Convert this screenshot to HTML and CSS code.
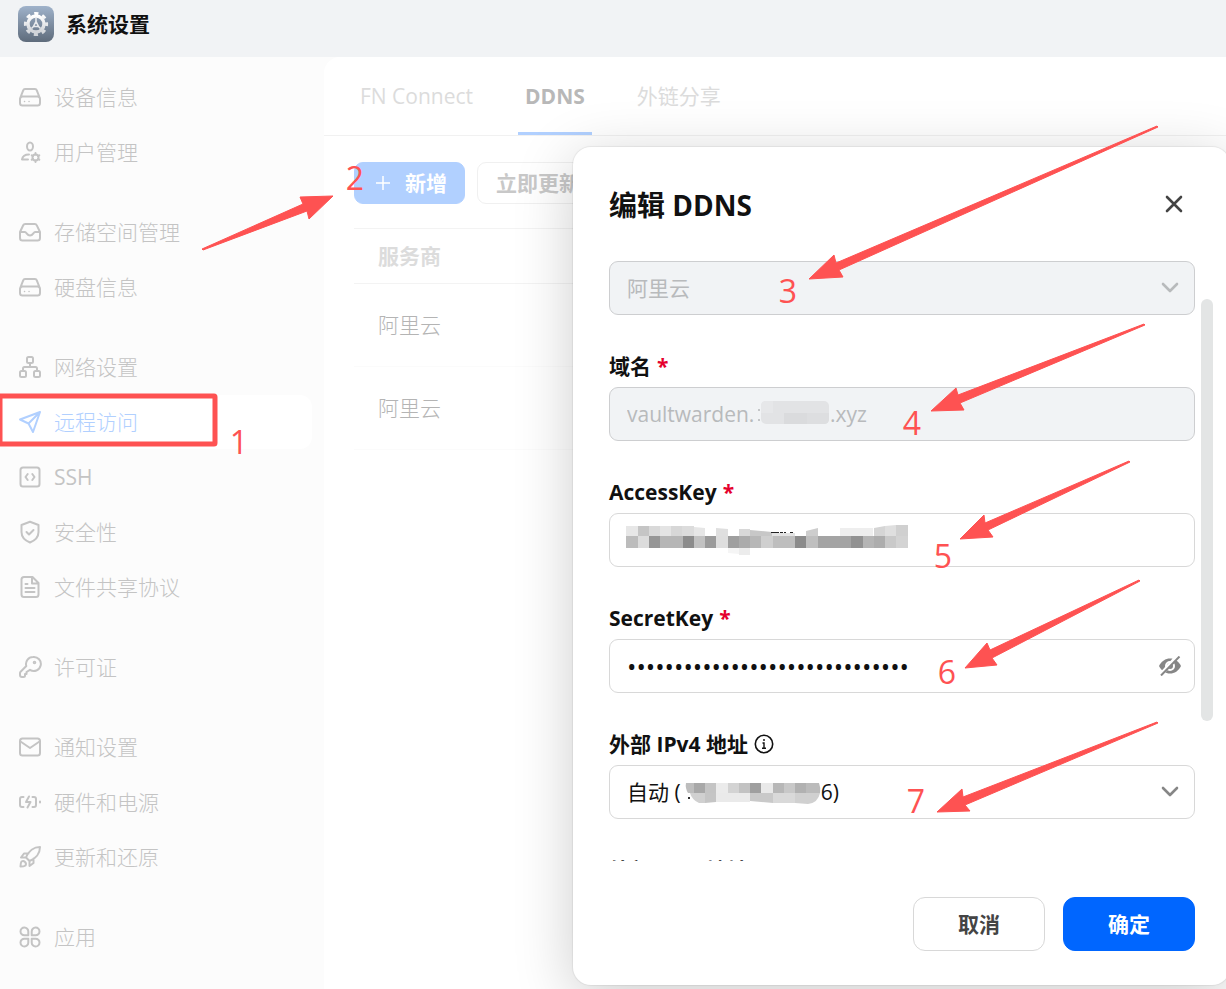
FILE: index.html
```
<!DOCTYPE html>
<html lang="zh-CN">

<head>
    <meta charset="UTF-8">
    <meta name="viewport" content="width=device-width, initial-scale=1.0">
    <title>系统设置</title>
    <link rel="stylesheet" href="styles.css">
</head>

<body>

    <header class="titlebar">
        <svg class="app-icon" viewBox="0 0 36 36">
            <defs>
                <linearGradient id="iconBg" x1="0" y1="0" x2="0" y2="1">
                    <stop offset="0" stop-color="#9fb2ca" />
                    <stop offset="1" stop-color="#5e6b7b" />
                </linearGradient>
                <linearGradient id="iconGear" x1="0" y1="0" x2="0" y2="1">
                    <stop offset="0" stop-color="#ffffff" />
                    <stop offset="1" stop-color="#d0d3d8" />
                </linearGradient>
            </defs>
            <rect width="36" height="36" rx="8" fill="url(#iconBg)" />
            <g fill="none" stroke="url(#iconGear)">
                <circle cx="18" cy="18" r="8" stroke-width="3.400" />
                <circle cx="18" cy="18" r="10.6" stroke-width="3" stroke-dasharray="4.2 4.125" stroke-dashoffset="2.1" />
            </g>
            <g stroke="#e8eaed" stroke-width="1.6" fill="none">
                <path d="M18 12v4M18 15.500l-2.500 5h5zM15.500 20.500l-2 2M20.500 20.500l2 2" />
            </g>
        </svg>
        <h1>系统设置</h1>
    </header>

    <div class="layout">
        <nav class="sidebar">
            <div class="nav-group">
                <a href="#" class="nav-item">
                    <svg class="icon" viewBox="0 0 24 24"><path d="M2 13.500 5.200 5.300Q5.700 4 7 4h10q1.300 0 1.800 1.300L22 13.500M4.500 11.500h15A2.500 2.500 0 0 1 22 14v4a2.500 2.500 0 0 1-2.500 2.500h-15A2.500 2.500 0 0 1 2 18v-4a2.500 2.500 0 0 1 2.500-2.500z" /><path class="dots" d="M6.500 16.500h.1M11 16.500h.1" /></svg>
                    设备信息
                </a>
                <a href="#" class="nav-item">
                    <svg class="icon" viewBox="0 0 24 24"><ellipse cx="12" cy="6.500" rx="3" ry="4" /><path d="M11 14.500c-4 0-6.500 2-7 5h6" /><circle cx="17.500" cy="17.500" r="3" /><path d="M17.500 13v1.500M17.500 20.500V22M13.700 15.300l1.200.7M20.100 19l1.200.700M13.700 19.700l1.200-.7M20.100 16l1.200-.7" /></svg>
                    用户管理
                </a>
            </div>
            <div class="nav-group">
                <a href="#" class="nav-item">
                    <svg class="icon" viewBox="0 0 24 24"><path d="M2 12 5.200 5.300Q5.800 4 7.200 4h9.600q1.400 0 2 1.300L22 12v6a2.500 2.500 0 0 1-2.500 2.500h-15A2.500 2.500 0 0 1 2 18zM2 12h5c1.500 0 2 3.500 5 3.500s3.500-3.500 5-3.500h5" /></svg>
                    存储空间管理
                </a>
                <a href="#" class="nav-item">
                    <svg class="icon" viewBox="0 0 24 24"><path d="M2 13.500 5.200 5.300Q5.700 4 7 4h10q1.300 0 1.800 1.300L22 13.500M4.500 11.500h15A2.500 2.500 0 0 1 22 14v4a2.500 2.500 0 0 1-2.500 2.500h-15A2.500 2.500 0 0 1 2 18v-4a2.500 2.500 0 0 1 2.500-2.500z" /><path class="dots" d="M6.500 16.500h.1M11 16.500h.1" /></svg>
                    硬盘信息
                </a>
            </div>
            <div class="nav-group">
                <a href="#" class="nav-item">
                    <svg class="icon" viewBox="0 0 24 24"><rect x="9" y="2" width="6" height="6" rx="1.500" /><rect x="2" y="16" width="6" height="6" rx="1.500" /><rect x="16" y="16" width="6" height="6" rx="1.500" /><path d="M12 8v4M5 16v-2.500A1.500 1.500 0 0 1 6.500 12h11a1.500 1.500 0 0 1 1.500 1.500V16" /></svg>
                    网络设置
                </a>
                <a href="#" class="nav-item active">
                    <svg class="icon" viewBox="0 0 24 24"><path d="M22 2 2 9.500l8.500 4L15 22zM22 2 10.500 13.500" /></svg>
                    远程访问
                </a>
                <a href="#" class="nav-item latin">
                    <svg class="icon" viewBox="0 0 24 24"><rect x="2.500" y="2.500" width="19" height="19" rx="2.500" /><path d="M9.700 9 7.500 12l2.200 3M14.300 9l2.200 3-2.200 3" /></svg>
                    SSH
                </a>
                <a href="#" class="nav-item">
                    <svg class="icon" viewBox="0 0 24 24"><path d="M12 1.800 20.500 5v7c0 5-3.500 8.500-8.500 10.500C7 20.500 3.500 17 3.500 12V5zM8.500 12l2.500 2.500 4.500-4.500" /></svg>
                    安全性
                </a>
                <a href="#" class="nav-item">
                    <svg class="icon" viewBox="0 0 24 24"><path d="M6 2h8.500l6 6v11.500a2.500 2.500 0 0 1-2.500 2.500H6a2.500 2.500 0 0 1-2.500-2.500v-15A2.500 2.500 0 0 1 6 2zM14 2v6.500h6.500M7.500 9h2M7.500 13h9M7.500 17h9" /></svg>
                    文件共享协议
                </a>
            </div>
            <div class="nav-group">
                <a href="#" class="nav-item">
                    <svg class="icon" viewBox="0 0 24 24"><path d="M15 2a7 7 0 0 0-6.700 9L2.600 16.700a2 2 0 0 0-.6 1.400V20a2 2 0 0 0 2 2h1.500a1.500 1.500 0 0 0 1.500-1.500V19h1.500V17l3.500-2.200A7 7 0 1 0 15 2z" /><circle cx="16.500" cy="7.500" r="0.800" /></svg>
                    许可证
                </a>
            </div>
            <div class="nav-group">
                <a href="#" class="nav-item">
                    <svg class="icon" viewBox="0 0 24 24"><rect x="2" y="3.500" width="20" height="17" rx="2.500" /><path d="m2.500 6.500 9.500 6.500 9.500-6.500" /></svg>
                    通知设置
                </a>
                <a href="#" class="nav-item">
                    <svg class="icon" viewBox="0 0 24 24"><path d="M5.500 7H4a2 2 0 0 0-2 2v6a2 2 0 0 0 2 2h1.500M14.500 7H16a2 2 0 0 1 2 2v6a2 2 0 0 1-2 2h-1.500M11 6.500 8 12h4.500l-3 5.500M22 11.500v1" /></svg>
                    硬件和电源
                </a>
                <a href="#" class="nav-item">
                    <svg class="icon" viewBox="0 0 24 24"><path d="M22 2c-6 0-11.500 4-14 10.500L11.500 16C18 13.500 22 8 22 2zM10.500 8.500H6L3 12.500h5M15.500 13.500V18l-4 3v-5M3.500 16.500C2.500 18 2.500 20 2.500 21.500c1.500 0 3.500 0 5-1 1.500-2.500-1.500-5.500-4-4z" /></svg>
                    更新和还原
                </a>
            </div>
            <div class="nav-group">
                <a href="#" class="nav-item">
                    <svg class="icon" viewBox="0 0 24 24"><path d="M10.300 10.300H6.500a3.900 3.900 0 1 1 3.800-3.800zM13.700 10.300V6.500a3.900 3.900 0 1 1 3.800 3.800zM10.300 13.700v3.800a3.900 3.900 0 1 1-3.800-3.800zM13.700 13.700h3.800a3.900 3.900 0 1 1-3.800 3.800z" /></svg>
                    应用
                </a>
            </div>
        </nav>

        <main class="content">
            <div class="tabs">
                <a href="#" class="tab">FN Connect</a>
                <a href="#" class="tab active">DDNS</a>
                <a href="#" class="tab">外链分享</a>
            </div>
            <div class="panel">
                <div class="toolbar">
                    <button type="button" class="tool-btn add">
                        <svg class="plus" viewBox="0 0 14 14"><path d="M7 0v14M0 7h14" /></svg>
                        新增
                    </button>
                    <button type="button" class="tool-btn">立即更新</button>
                </div>
                <table class="list">
                    <thead>
                        <tr><th>服务商</th></tr>
                    </thead>
                    <tbody>
                        <tr><td>阿里云</td></tr>
                        <tr><td>阿里云</td></tr>
                    </tbody>
                </table>
            </div>
        </main>
    </div>

    <div class="modal" role="dialog" aria-labelledby="modalTitle">
        <div class="modal-header">
            <h2 id="modalTitle">编辑 DDNS</h2>
            <button type="button" class="close-btn" aria-label="关闭">
                <svg viewBox="0 0 20 20"><path d="M3 2l14 14M17 2 3 16" /></svg>
            </button>
        </div>
        <form class="modal-body" id="ddnsForm">
            <div class="control">
                <select class="input" aria-label="服务商" disabled>
                    <option>阿里云</option>
                </select>
                <svg class="chevron" viewBox="0 0 18 18"><path d="m2 5 7 7 7-7" /></svg>
            </div>

            <div class="field">
                <label for="domain">域名 <span class="required">*</span></label>
                <div class="control">
                    <input class="input" id="domain" type="text" value="vaultwarden.&emsp;&emsp;&emsp;&ensp;&hairsp;.xyz" disabled>
                    <svg class="mask mask-domain" width="72" height="24" viewBox="0 0 72 24">
                        <rect x="0" y="8" width="2" height="2" fill="#c4c6c8" />
                        <rect x="0" y="18" width="2" height="2" fill="#c4c6c8" />
                        <rect x="3" y="0" width="68" height="23" rx="5" fill="#e2e3e5" />
                        <path d="M26 12h23v11H26z" fill="#dadbdd" />
                        <path d="M49 12h22v6q0 5-5 5H49z" fill="#dddee0" />
                        <path d="M3 12V5q0-5 5-5h7v12z" fill="#e6e7e9" />
                    </svg>
                </div>
            </div>

            <div class="field">
                <label for="accessKey">AccessKey <span class="required">*</span></label>
                <div class="control">
                    <input class="input" id="accessKey" type="text">
                    <svg class="mask mask-key" width="283" height="30" viewBox="0 0 283 30">
                        <path d="M0 1h12v10H0z" fill="#e7e7e7" />
                        <path d="M12 1h11v10H12z" fill="#c5c5c5" />
                        <path d="M23 1h11v10H23z" fill="#d9d9d9" />
                        <path d="M34 1h11v10H34z" fill="#e4e4e4" />
                        <path d="M45 1h11v10H45z" fill="#d7d7d7" />
                        <path d="M56 1h12v10H56z" fill="#dcdcdc" />
                        <path d="M68 2l11 1v8H68z" fill="#e6e6e6" />
                        <path d="M90 3l12 1v7H90z" fill="#dfdfdf" />
                        <path d="M113 4h11v7h-11z" fill="#d8d8d8" />
                        <path d="M124 5l22 2v4h-22z" fill="#c7c7c7" />
                        <path d="M146 8h23v3h-23z" fill="#e3e3e3" />
                        <path d="M145 7.500h8M154 7.500h3M158 7.500h2M164 7.500h3" stroke="#222" stroke-width="1" />
                        <path d="M180 6l12-3v8h-12z" fill="#cdcdcd" />
                        <path d="M214 3h33v8h-33z" fill="#eeeeee" />
                        <path d="M248 3l11-2v10h-11z" fill="#d5d5d5" />
                        <path d="M259 1l11-1v11h-11z" fill="#dfdfdf" />
                        <path d="M270 0h12v11h-12z" fill="#d0d0d0" />
                        <path d="M0 11h12v12H0z" fill="#bcbcbc" />
                        <path d="M12 11h11v12H12z" fill="#dcdcdc" />
                        <path d="M23 11h11v12H23z" fill="#969696" />
                        <path d="M34 11h23v12H34z" fill="#b6b6b6" />
                        <path d="M57 11h11v12H57z" fill="#8c8c8c" />
                        <path d="M68 11h11v12H68z" fill="#c2c2c2" />
                        <path d="M79 11h11v12H79z" fill="#9b9b9b" />
                        <path d="M90 11h12v12H90z" fill="#dedede" />
                        <path d="M102 11h11v12h-11z" fill="#9f9f9f" />
                        <path d="M113 11h11v12h-11z" fill="#ababab" />
                        <path d="M124 11h11v12h-11z" fill="#b7b7b7" />
                        <path d="M135 11h12v12h-12z" fill="#cfcfcf" />
                        <path d="M147 11h22v12h-22z" fill="#bebebe" />
                        <path d="M169 11h11v12h-11z" fill="#8b8b8b" />
                        <path d="M180 11h12v12h-12z" fill="#bfbfbf" />
                        <path d="M192 11h33v12h-33z" fill="#a4a4a4" />
                        <path d="M225 11h12v12h-12z" fill="#929292" />
                        <path d="M237 11h11v12h-11z" fill="#b5b5b5" />
                        <path d="M248 11h11v12h-11z" fill="#adadad" />
                        <path d="M259 11h11v12h-11z" fill="#c9c9c9" />
                        <path d="M270 11h12v12h-12z" fill="#d3d3d3" />
                        <path d="M102 23h11v6l-11-1z" fill="#f5f5f5" />
                        <path d="M113 23h11v7h-11z" fill="#ececec" />
                    </svg>
                </div>
            </div>

            <div class="field">
                <label for="secretKey">SecretKey <span class="required">*</span></label>
                <div class="control">
                    <input class="input secret" id="secretKey" type="password" value="abcdefghijabcdefghijabcdefghij">
                    <button type="button" class="eye-btn" aria-label="显示密码">
                        <svg viewBox="0 0 24 20"><path d="M1 10c2.500-5 6.500-7.500 11-7.500S20.500 5 23 10c-2.500 5-6.500 7.500-11 7.500S3.500 15 1 10z" fill="#868686" /><circle cx="12" cy="10" r="4" fill="#868686" stroke="#fff" stroke-width="2" /><path d="M19.500 0 2.500 19" stroke="#fff" stroke-width="4" /><path d="M21.500 0.500 3 19.500" stroke="#868686" stroke-width="2" /></svg>
                    </button>
                </div>
            </div>

            <div class="field">
                <label for="ipv4">外部 IPv4 地址
                    <svg class="info" viewBox="0 0 20 20"><circle cx="10" cy="10" r="8.700" fill="none" stroke="#111" stroke-width="1.600" /><path d="M10 5v2M8.500 9H10v5M8 14.300h4" fill="none" stroke="#111" stroke-width="1.400" /></svg>
                </label>
                <div class="control">
                    <select class="input" id="ipv4">
                        <option>自动 (&emsp;&emsp;&emsp;&emsp;&emsp;&emsp;&ensp;&thinsp;6)</option>
                    </select>
                    <svg class="mask mask-ip" width="138" height="22" viewBox="0 0 138 22">
                        <path d="M2 1h8v10H4Q1 6 2 1z" fill="#bdbdbd" />
                        <path d="M10 1h11v10H10z" fill="#a8a8a8" />
                        <path d="M21 1h11v10H21z" fill="#c4c4c4" />
                        <path d="M32 1h12v10H32z" fill="#ebebeb" />
                        <path d="M44 1h11v10H44z" fill="#d3d3d3" />
                        <path d="M55 1h11v10H55z" fill="#c2c2c2" />
                        <path d="M66 1h11v10H66z" fill="#9f9f9f" />
                        <path d="M77 1h12v10H77z" fill="#e9e9e9" />
                        <path d="M89 1h11v10H89z" fill="#b7b7b7" />
                        <path d="M100 1h11v10h-11z" fill="#c8c8c8" />
                        <path d="M111 1h11v10h-11z" fill="#b1b1b1" />
                        <path d="M122 1h13q2 5 1 10h-14z" fill="#bbbbbb" />
                        <path d="M6 11h15v10h-6Q8 18 6 11z" fill="#d0d0d0" />
                        <path d="M21 11h11v9l-11 1z" fill="#c5c5c5" />
                        <path d="M32 11h34v9H32z" fill="#eaeaea" />
                        <path d="M66 11h23v10l-23-2z" fill="#c9c9c9" />
                        <path d="M89 11h22v10H89z" fill="#d9d9d9" />
                        <path d="M111 11h25q-2 10-12 11l-13-1z" fill="#d0d0d0" />
                        <path d="M4 15h2v2H4z" fill="#333333" />
                    </svg>
                    <svg class="chevron" viewBox="0 0 18 18"><path d="m2 5 7 7 7-7" /></svg>
                </div>
            </div>

            <div class="field">
                <label for="ipv6">外部 IPv6 地址</label>
                <div class="control">
                    <select class="input" id="ipv6">
                        <option>自动</option>
                    </select>
                </div>
            </div>
        </form>
        <div class="modal-footer">
            <button type="button" class="btn">取消</button>
            <button type="submit" form="ddnsForm" class="btn primary">确定</button>
        </div>
        <div class="scroll-thumb"></div>
    </div>

    <!-- step markers -->
    <svg class="notes" width="1226" height="989" viewBox="0 0 1226 989">
        <rect x="0" y="396" width="215" height="48" rx="1" fill="none" stroke="#fe5252" stroke-width="5" />
        <g fill="#fe5252" stroke="#fe5252" stroke-width="1" stroke-linejoin="round">
            <polygon points="202,249 303,204 300,197 333,196 309,219 307,211 203,250" />
            <polygon points="1157,126 836,263 834,255 809,279 843,277 839,270 1158,127" />
            <polygon points="1144,324 958,395 956,388 931,411 964,410 960,403 1145,325" />
            <polygon points="1129,461 985,523 984,515 960,539 993,537 988,530 1130,462" />
            <polygon points="1139,580 990,650 987,643 965,668 997,665 992,658 1140,581" />
            <polygon points="1157,722 963,797 962,789 937,812 970,811 965,805 1158,723" />
        </g>
        <g class="note-num">
            <text x="239" y="454">1</text>
            <text x="355" y="190">2</text>
            <text x="788" y="303">3</text>
            <text x="912" y="435">4</text>
            <text x="943" y="568">5</text>
            <text x="947" y="684">6</text>
            <text x="916" y="813">7</text>
        </g>
    </svg>

</body>

</html>
```
FILE: styles.css
```
/* Basic Reset */
* {
    margin: 0;
    padding: 0;
    box-sizing: border-box;
}

body {
    font-family: 'Open Sans', 'Noto Sans CJK SC', sans-serif;
    font-size: 21px;
    line-height: 30px;
    color: #111;
    background-color: #fcfcfc;
    display: flex;
    flex-direction: column;
    min-height: 100vh;
    position: relative;
    overflow: hidden;
}

a {
    color: inherit;
    text-decoration: none;
}

button,
input,
select {
    font: inherit;
    color: inherit;
}

button {
    cursor: pointer;
}

/* Title Bar */
.titlebar {
    display: flex;
    align-items: center;
    gap: 12px;
    height: 57px;
    padding: 0 18px 9px;
    background-color: #f1f3f5;
}

.app-icon {
    width: 36px;
    height: 36px;
}

h1 {
    font-size: 21px;
    font-weight: bold;
}

.layout {
    display: flex;
    flex: 1;
}

/* Sidebar */
.sidebar {
    width: 324px;
    padding: 13px 12px 0 0;
    display: flex;
    flex-direction: column;
    gap: 26px;
    color: #c4c4c4;
}

.nav-group {
    display: flex;
    flex-direction: column;
    gap: 1px;
}

.nav-item {
    display: flex;
    align-items: center;
    gap: 12px;
    height: 54px;
    padding-left: 18px;
    border-radius: 12px;
    font-weight: 300;
}

.nav-item.latin {
    font-weight: normal;
}

.nav-item.active {
    background-color: #fff;
    color: #b1d0ff;
}

.icon {
    width: 24px;
    height: 24px;
    fill: none;
    stroke: currentColor;
    stroke-width: 2;
    stroke-linecap: round;
    stroke-linejoin: round;
}

.icon .dots {
    stroke-width: 1.5;
}

/* Main Content */
.content {
    flex: 1;
    background-color: #fff;
    border-top-left-radius: 16px;
}

.tabs {
    display: flex;
    gap: 38px;
    height: 79px;
    padding-left: 29px;
    border-bottom: 1px solid #f1f1f1;
}

.tab {
    padding: 24px 7px 0;
    border-bottom: 3px solid transparent;
    color: #dcdcdc;
}

.tab.active {
    border-bottom-color: #b1d0ff;
    color: #b8b8b8;
    font-weight: bold;
}

.panel {
    padding: 26px 0 0 30px;
}

.toolbar {
    display: flex;
    gap: 12px;
    margin-bottom: 24px;
}

.tool-btn {
    display: flex;
    align-items: center;
    gap: 15px;
    height: 42px;
    padding: 0 18px;
    border: 1px solid #f0f0f0;
    border-radius: 9px;
    background-color: #fff;
    color: #c8c8c8;
    font-weight: bold;
}

.tool-btn.add {
    padding: 0 17px 0 21px;
    border-color: #b1d0ff;
    background-color: #b1d0ff;
    color: #fff;
}

.plus {
    width: 14px;
    height: 14px;
    stroke: #fff;
    stroke-width: 1.5;
}

.list {
    width: 100%;
    border-collapse: collapse;
    text-align: left;
}

.list th {
    height: 55px;
    padding-left: 24px;
    border-top: 1px solid #f3f3f3;
    border-bottom: 1px solid #f3f3f3;
    color: #dcdcdc;
}

.list td {
    height: 83px;
    padding-left: 24px;
    border-bottom: 1px solid #fbfbfb;
    color: #b4b4b4;
    font-weight: 300;
}

/* Modal */
.modal {
    position: absolute;
    top: 147px;
    left: 573px;
    right: -4px;
    bottom: 4px;
    display: flex;
    flex-direction: column;
    background-color: #fff;
    border-radius: 18px;
    box-shadow: 0 0 1px 1px rgba(0, 0, 0, 0.06), 0 12px 60px rgba(0, 0, 0, 0.2);
}

.modal-header {
    display: flex;
    justify-content: space-between;
    align-items: center;
    padding: 40px 46px 38px 36px;
}

h2 {
    font-size: 28px;
    line-height: 36px;
    font-weight: bold;
}

.close-btn {
    width: 20px;
    height: 20px;
    border: none;
    background: none;
}

.close-btn svg {
    display: block;
    stroke: #444;
    stroke-width: 2.6;
    stroke-linecap: round;
}

.modal-body {
    flex: 1;
    min-height: 0;
    overflow: hidden;
    display: flex;
    flex-direction: column;
    gap: 36px;
    padding: 0 35px 0 36px;
}

.field {
    display: flex;
    flex-direction: column;
    gap: 6px;
}

label {
    display: flex;
    align-items: center;
    gap: 6px;
    font-weight: bold;
    height: 30px;
}

.required {
    color: #e5002d;
}

.info {
    width: 20px;
    height: 20px;
}

.control {
    position: relative;
}

.input {
    display: block;
    width: 100%;
    height: 54px;
    padding: 0 17px;
    border: 1px solid #d8d8d8;
    border-radius: 9px;
    background-color: #fff;
    appearance: none;
    outline: none;
}

.input:disabled {
    border-color: #cdced0;
    background-color: #f1f3f5;
    color: #b8babc;
    opacity: 1;
}

.input.secret {
    font-size: 25px;
}

.chevron {
    position: absolute;
    top: 18px;
    right: 16px;
    width: 18px;
    height: 18px;
    fill: none;
    stroke: #868686;
    stroke-width: 2.6;
    stroke-linecap: round;
    stroke-linejoin: round;
    pointer-events: none;
}

.input:disabled ~ .chevron {
    stroke: #b8babc;
}

.eye-btn {
    position: absolute;
    top: 17px;
    right: 13px;
    width: 24px;
    height: 20px;
    border: none;
    background: none;
}

.eye-btn svg {
    display: block;
}

/* Mosaic over private values */
.mask {
    position: absolute;
    pointer-events: none;
}

.mask-domain {
    top: 14px;
    left: 149px;
}

.mask-key {
    top: 12px;
    left: 17px;
}

.mask-ip {
    top: 17px;
    left: 75px;
}

.modal-footer {
    display: flex;
    justify-content: flex-end;
    gap: 18px;
    padding: 36px 35px 34px;
}

.btn {
    width: 132px;
    height: 54px;
    border: 1px solid #d8d8d8;
    border-radius: 12px;
    background-color: #fff;
    color: #444;
    font-weight: bold;
}

.btn.primary {
    border-color: #0066ff;
    background-color: #0066ff;
    color: #fff;
}

.scroll-thumb {
    position: absolute;
    top: 152px;
    right: 17px;
    width: 12px;
    height: 422px;
    border-radius: 6px;
    background-color: #e3e5e5;
}

/* Step markers */
.notes {
    position: absolute;
    top: 0;
    left: 0;
    pointer-events: none;
}

.note-num {
    font-size: 32px;
    fill: #fe5252;
    text-anchor: middle;
}
```
